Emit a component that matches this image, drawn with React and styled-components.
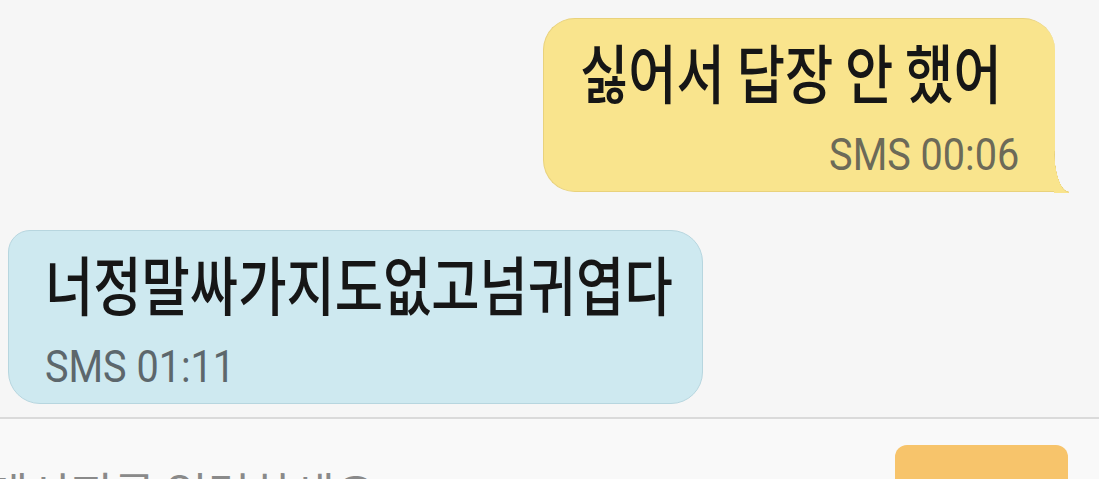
import React from "react";
import styled, { createGlobalStyle, css } from "styled-components";

const Global = createGlobalStyle`
  html, body {
    margin: 0;
    padding: 0;
    background: #f6f6f6;
    overflow: hidden;
  }
  * { box-sizing: border-box; }
`;

const Page = styled.div`
  width: 1099px;
  height: 479px;
  display: flex;
  flex-direction: column;
  background: #f6f6f6;
  overflow: hidden;
`;

const ChatArea = styled.div`
  flex-shrink: 0;
  display: flex;
  flex-direction: column;
  gap: 38px;
  padding-top: 18px;
  padding-bottom: 13px;
`;

const Row = styled.div`
  display: flex;
  justify-content: ${(p) => (p.$mine ? "flex-end" : "flex-start")};
  padding: ${(p) => (p.$mine ? "0 44px 0 0" : "0 0 0 8px")};
`;

const palette = {
  mine: { bg: "#f9e48d", border: "#e9d27c", meta: "#6c6a58" },
  theirs: { bg: "#cee9f0", border: "#b7d6df", meta: "#5d676c" },
};

const Bubble = styled.div`
  position: relative;
  width: ${(p) => p.$width}px;
  height: 174px;
  padding: 15px 36px 0 36px;
  display: flex;
  flex-direction: column;
  background: ${(p) => palette[p.$kind].bg};
  border: 1.5px solid ${(p) => palette[p.$kind].border};
  border-radius: 32px;
  ${(p) =>
    p.$kind === "mine"
      ? css`
          border-bottom-right-radius: 0;
          border-right-width: 0;
          &::after {
            content: "";
            position: absolute;
            right: -14px;
            bottom: -1.5px;
            width: 15px;
            height: 42px;
            background: radial-gradient(
              ellipse 15px 42px at 100% 0,
              transparent 96%,
              ${palette.mine.border} 97%,
              ${palette.mine.bg} 100%
            );
          }
        `
      : css`
          border-top-left-radius: 22px;
        `}
`;

const MessageText = styled.div`
  font-family: "Noto Sans CJK KR", "Noto Sans", sans-serif;
  font-weight: 500;
  font-size: 64px;
  line-height: 72px;
  color: #161616;
  white-space: nowrap;
  word-spacing: 0;
  transform: scaleX(0.82);
  transform-origin: left center;
`;

const Meta = styled.div`
  margin-top: 27px;
  font-family: Roboto, "Liberation Sans", sans-serif;
  font-size: 44px;
  line-height: 44px;
  color: ${(p) => palette[p.$kind].meta};
  white-space: nowrap;
  align-self: ${(p) => (p.$kind === "mine" ? "flex-end" : "flex-start")};
  transform: scaleX(0.9);
  transform-origin: ${(p) => (p.$kind === "mine" ? "right" : "left")} center;
`;

const Divider = styled.div`
  flex-shrink: 0;
  height: 2px;
  background: #dadada;
`;

const InputBar = styled.div`
  flex: 1;
  min-height: 0;
  overflow: hidden;
  display: flex;
  align-items: flex-start;
  justify-content: space-between;
  background: #f9f9f9;
  padding: 26px 31px 0 0;
`;

const Placeholder = styled.div`
  margin-top: 23px;
  margin-left: -14px;
  font-family: "Noto Sans CJK KR", "Noto Sans", sans-serif;
  font-size: 46px;
  line-height: 46px;
  color: #8a8a8a;
  white-space: nowrap;
`;

const SendButton = styled.div`
  flex-shrink: 0;
  width: 173px;
  height: 80px;
  border-radius: 12px;
  background: #f7c46b;
`;

export default function App() {
  return (
    <Page>
      <Global />
      <ChatArea>
        <Row $mine>
          <Bubble $kind="mine" $width={512}>
            <MessageText>싫어서 답장 안 했어</MessageText>
            <Meta $kind="mine">SMS 00:06</Meta>
          </Bubble>
        </Row>
        <Row>
          <Bubble $kind="theirs" $width={695}>
            <MessageText>너정말싸가지도없고넘귀엽다</MessageText>
            <Meta $kind="theirs">SMS 01:11</Meta>
          </Bubble>
        </Row>
      </ChatArea>
      <Divider />
      <InputBar>
        <Placeholder>메시지를 입력하세요</Placeholder>
        <SendButton />
      </InputBar>
    </Page>
  );
}
